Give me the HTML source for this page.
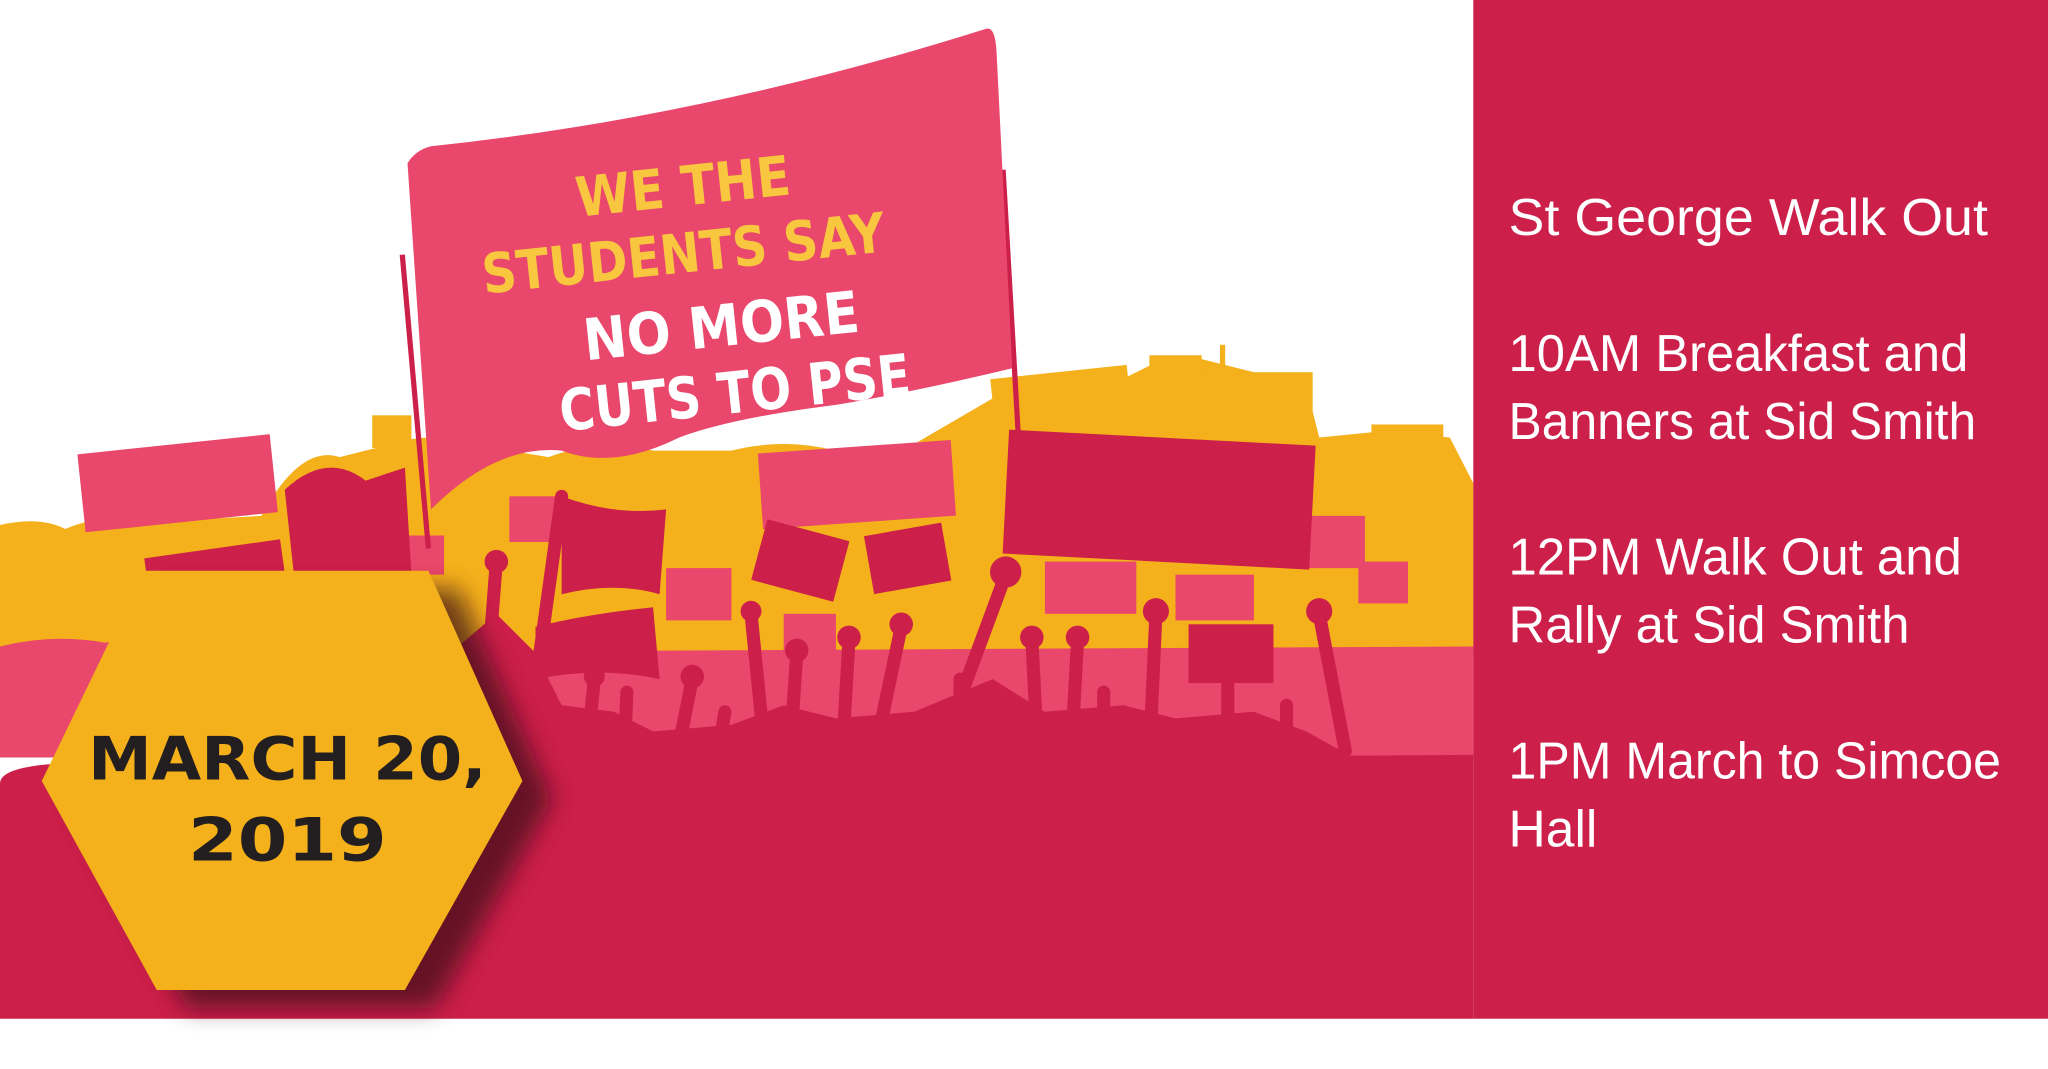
<!DOCTYPE html>
<html><head><meta charset="utf-8"><style>
html,body{margin:0;padding:0;background:#fff;}
svg{display:block;}
</style></head><body>
<svg width="2048" height="1069" viewBox="0 0 1568 818.5" preserveAspectRatio="none" xmlns="http://www.w3.org/2000/svg">
<defs>
<filter id="sh" x="-30%" y="-30%" width="160%" height="160%"><feGaussianBlur stdDeviation="9"/></filter>
</defs>
<rect width="1568" height="818.5" fill="#fff"/>
<!-- yellow crowd band -->
<path d="M0 402 Q30 395 50 405 Q80 392 110 400 L200 395 Q230 340 260 350 L300 340 Q330 330 360 340 L420 350 Q460 335 500 345 L560 345 Q600 335 640 345 L700 340 L760 305 L860 290 L880 280 L920 275 L1000 295 L1010 335 L1060 330 L1110 335 L1128 370 L1128 500 L0 500 Z" fill="#f4b11c"/>
<rect x="760" y="285" width="105" height="42" fill="#f4b11c" transform="rotate(-6 810 305)"/>
<rect x="920" y="285" width="85" height="50" fill="#f4b11c"/>
<rect x="1050" y="325" width="55" height="35" fill="#f4b11c"/>
<rect x="285" y="318" width="30" height="25" fill="#f4b11c"/>
<rect x="880" y="272" width="40" height="35" fill="#f4b11c"/>
<rect x="934" y="264" width="4" height="80" fill="#f4b11c"/>
<!-- pink band -->
<path d="M0 495 Q40 485 80 492 Q110 488 140 500 L1128 495 L1128 580 L0 580 Z" fill="#e9476b"/>
<!-- pink signs -->
<rect x="62" y="340" width="148" height="60" fill="#e9476b" transform="rotate(-6 136 370)"/>
<rect x="582" y="342" width="148" height="58" fill="#e9476b" transform="rotate(-4 656 370)"/>
<rect x="390" y="380" width="40" height="35" fill="#e9476b"/>
<rect x="1000" y="395" width="45" height="40" fill="#e9476b"/>
<rect x="1040" y="430" width="38" height="32" fill="#e9476b"/>
<rect x="800" y="430" width="70" height="40" fill="#e9476b"/>
<rect x="510" y="435" width="50" height="40" fill="#e9476b"/>
<rect x="600" y="470" width="40" height="35" fill="#e9476b"/>
<rect x="300" y="410" width="40" height="30" fill="#e9476b"/>
<rect x="900" y="440" width="60" height="35" fill="#e9476b"/>
<!-- crimson base -->
<path d="M0 600 Q0 588 40 585 L1128 578 L1128 780 L0 780 Z" fill="#cc1f4a"/>
<!-- crimson crowd silhouettes -->
<path d="M330 585 L345 500 L380 470 L410 500 L430 540 L470 545 L500 560 L560 555 L600 540 L640 550 L700 545 L760 520 L800 545 L860 540 L900 550 L960 545 L1000 560 L1045 585 Z" fill="#cc1f4a"/>
<rect x="770" y="335" width="235" height="95" fill="#cc1f4a" transform="rotate(3 887 382)"/>
<rect x="580" y="405" width="65" height="48" fill="#cc1f4a" transform="rotate(15 612 430)"/>
<rect x="665" y="405" width="60" height="45" fill="#cc1f4a" transform="rotate(-10 695 428)"/>
<rect x="910" y="478" width="65" height="45" fill="#cc1f4a"/>
<path d="M218 375 Q250 345 280 368 L310 358 L315 440 L225 440 Z" fill="#cc1f4a"/>
<path d="M430 380 Q470 395 510 390 L505 455 Q470 445 430 455 Z" fill="#cc1f4a"/>
<path d="M410 480 Q450 470 500 465 L505 520 Q460 510 410 520 Z" fill="#cc1f4a"/>
<rect x="112" y="420" width="105" height="30" fill="#cc1f4a" transform="rotate(-8 165 435)"/>
<g stroke="#cc1f4a" stroke-width="10" stroke-linecap="round">
<line x1="380" y1="430" x2="370" y2="560"/><line x1="430" y1="380" x2="405" y2="560"/>
<line x1="455" y1="520" x2="450" y2="570"/><line x1="480" y1="530" x2="478" y2="575"/>
<line x1="530" y1="520" x2="520" y2="570"/><line x1="555" y1="545" x2="550" y2="575"/>
<line x1="575" y1="470" x2="585" y2="570"/>
<line x1="610" y1="500" x2="605" y2="575"/><line x1="650" y1="490" x2="645" y2="575"/>
<line x1="690" y1="480" x2="670" y2="575"/>
<line x1="735" y1="520" x2="735" y2="580"/><line x1="770" y1="440" x2="720" y2="575"/>
<line x1="790" y1="490" x2="795" y2="585"/><line x1="825" y1="490" x2="820" y2="580"/>
<line x1="845" y1="530" x2="845" y2="580"/><line x1="885" y1="470" x2="880" y2="580"/>
<line x1="940" y1="520" x2="940" y2="575"/><line x1="985" y1="540" x2="985" y2="575"/>
<line x1="1010" y1="470" x2="1030" y2="575"/>
</g>
<g fill="#cc1f4a">
<circle cx="380" cy="430" r="9"/><circle cx="530" cy="518" r="9"/><circle cx="610" cy="498" r="9"/>
<circle cx="650" cy="488" r="9"/><circle cx="690" cy="478" r="9"/><circle cx="770" cy="438" r="12"/>
<circle cx="790" cy="488" r="9"/><circle cx="825" cy="488" r="9"/><circle cx="885" cy="468" r="10"/>
<circle cx="1010" cy="468" r="10"/><circle cx="575" cy="468" r="8"/><circle cx="455" cy="518" r="8"/>
</g>
<!-- big flag poles + flag -->
<line x1="308" y1="195" x2="328" y2="420" stroke="#cc1f4a" stroke-width="4"/>
<line x1="768" y1="130" x2="780" y2="340" stroke="#cc1f4a" stroke-width="4"/>
<path d="M312 125 Q318 115 330 112 Q540 90 755 22 Q762 20 763 40 L775 282 Q700 300 640 310 Q560 320 520 335 Q470 360 430 345 Q380 340 330 390 Z" fill="#e9476b"/>
<g transform="rotate(-6 540 210)" font-family="'DejaVu Sans','Liberation Sans',sans-serif" font-weight="bold" text-anchor="middle">
<text x="530" y="156" font-size="42" fill="#f9c640" textLength="165" lengthAdjust="spacingAndGlyphs">WE THE</text>
<text x="525" y="207" font-size="42" fill="#f9c640" textLength="310" lengthAdjust="spacingAndGlyphs">STUDENTS SAY</text>
<text x="548" y="266" font-size="44" fill="#fff" textLength="212" lengthAdjust="spacingAndGlyphs">NO MORE</text>
<text x="553" y="318" font-size="44" fill="#fff" textLength="270" lengthAdjust="spacingAndGlyphs">CUTS TO PSE</text>
</g>
<!-- hexagon -->
<polygon points="55,612 133,451 351,451 423,612 333,772 143,772" fill="#3a0a15" opacity="0.7" filter="url(#sh)"/>
<polygon points="32,598 110,437 328,437 400,598 310,758 120,758" fill="#f4b11c"/>
<g font-family="'DejaVu Sans','Liberation Sans',sans-serif" font-weight="bold" fill="#231f20" text-anchor="middle">
<text x="220" y="597" font-size="46" textLength="305" lengthAdjust="spacingAndGlyphs">MARCH 20,</text>
<text x="220" y="659" font-size="46" textLength="152" lengthAdjust="spacingAndGlyphs">2019</text>
</g>
<!-- right panel -->
<rect x="1128" y="0" width="440" height="780" fill="#cc1f4a"/>
<g font-family="'Liberation Sans',sans-serif" fill="#fff" font-size="40">
<text x="1155" y="180" textLength="367" lengthAdjust="spacingAndGlyphs">St George Walk Out</text>
<text x="1155" y="284" textLength="352" lengthAdjust="spacingAndGlyphs">10AM Breakfast and</text>
<text x="1155" y="336" textLength="358" lengthAdjust="spacingAndGlyphs">Banners at Sid Smith</text>
<text x="1155" y="440" textLength="347" lengthAdjust="spacingAndGlyphs">12PM Walk Out and</text>
<text x="1155" y="492" textLength="307" lengthAdjust="spacingAndGlyphs">Rally at Sid Smith</text>
<text x="1155" y="596" textLength="377" lengthAdjust="spacingAndGlyphs">1PM March to Simcoe</text>
<text x="1155" y="648" textLength="68" lengthAdjust="spacingAndGlyphs">Hall</text>
</g>
</svg>
</body></html>
